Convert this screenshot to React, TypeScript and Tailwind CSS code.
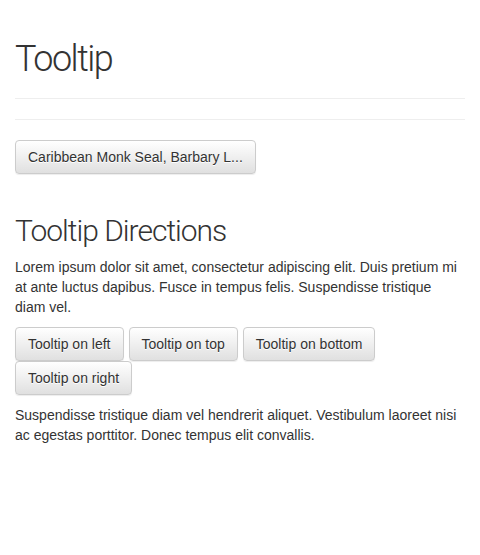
const btn =
  "inline-block rounded-[4px] border border-[#ccc] bg-gradient-to-b from-white to-[#e0e0e0] px-3 py-[6px] text-[14px] leading-[20px] text-[#333] [text-shadow:0_1px_0_#fff] shadow-[inset_0_1px_0_rgba(255,255,255,0.15),0_1px_1px_rgba(0,0,0,0.075)] whitespace-nowrap";

const App = () => {
  return (
    <div className="min-h-screen bg-white text-[#333] text-[14px] leading-[20px] [font-family:'Liberation_Sans',Arial,sans-serif]">
      <div className="px-[15px] w-[480px]">
        <div className="border-b border-[#eee] pt-[40px] pb-[9px] mb-[20px]">
          <h1 className="mb-[10px] text-[36px] leading-[39px] font-light tracking-[-1.5px] [font-family:Roboto,'Liberation_Sans',sans-serif] text-[#333]">
            Tooltip
          </h1>
        </div>
        <hr className="border-0 border-t border-[#eee] mb-[20px]" />

        <button className={btn}>Caribbean Monk Seal, Barbary L...</button>

        <h2 className="mt-[40px] mb-[10px] text-[30px] leading-[33px] font-light tracking-[-1px] [font-family:Roboto,'Liberation_Sans',sans-serif] text-[#333]">
          Tooltip Directions
        </h2>
        <p className="mb-[10px]">
          Lorem ipsum dolor sit amet, consectetur adipiscing elit. Duis pretium mi at ante luctus dapibus. Fusce in
          tempus felis. Suspendisse tristique diam vel.
        </p>
        <div className="flex flex-wrap gap-x-[5px] w-[370px]">
          <button className={btn}>Tooltip on left</button>
          <button className={btn}>Tooltip on top</button>
          <button className={btn}>Tooltip on bottom</button>
          <button className={btn}>Tooltip on right</button>
        </div>
        <p className="mt-[10px]">
          Suspendisse tristique diam vel hendrerit aliquet. Vestibulum laoreet nisi ac egestas porttitor. Donec
          tempus elit convallis.
        </p>
      </div>
    </div>
  );
};

export default App;
